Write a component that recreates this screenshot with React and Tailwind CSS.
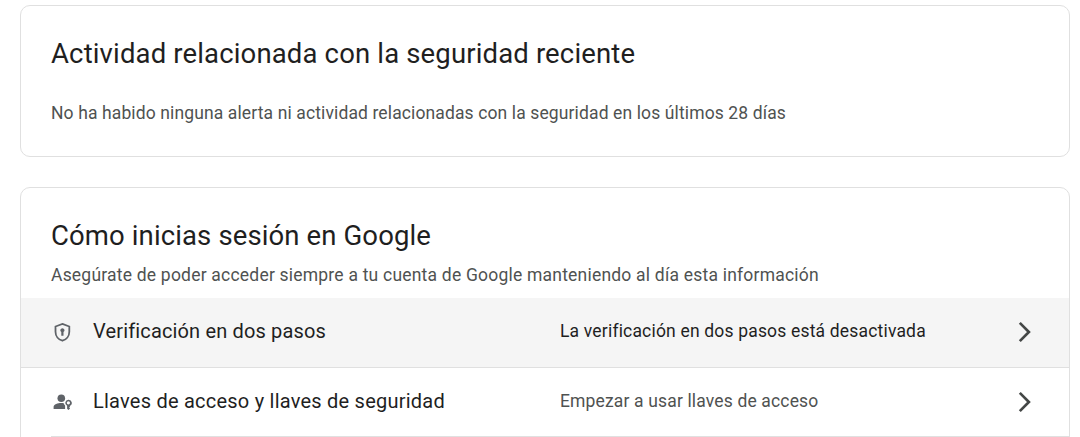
function ShieldLock() {
  return (
    <svg viewBox="0 0 22 22" className="size-[22px] shrink-0 -translate-y-px text-[#5f6368]" fill="currentColor">
      <path d="m11.4 2.9 6.9 2.6v5.2c0 4.2-2.9 7.9-6.9 9-4-1.1-6.9-4.8-6.9-9V5.5l6.9-2.6Z" fill="none" stroke="currentColor" strokeWidth="1.8" />
      <path d="M11.4 7.2a2.1 2.1 0 0 0-1.1 3.9v3.7h2.2v-3.7a2.1 2.1 0 0 0-1.1-3.9Z" />
    </svg>
  );
}

function PersonKey() {
  return (
    <svg viewBox="0 0 22 22" className="size-[22px] shrink-0 text-[#5f6368]" fill="currentColor">
      <circle cx="10.3" cy="7.3" r="3.8" />
      <path d="M2.6 17.9v-1.8c0-2.7 4.2-4 7.7-4 1.1 0 1.9.1 2.7.3.2 1 .5 1.5 1.1 2v3.5Z" />
      <path fillRule="evenodd" d="M17.4 8.7a3.2 3.2 0 0 0-1.3 6.1v3l1.3 1.2 1.7-1.6-.9-1 .9-1-.4-.5a3.2 3.2 0 0 0-1.3-6.2Zm0 1.5a1.6 1.6 0 1 1 0 3.2 1.6 1.6 0 0 1 0-3.2Z" />
    </svg>
  );
}

function Chevron() {
  return (
    <svg viewBox="0 0 14 22" className="h-[22px] w-[14px] shrink-0" fill="none" stroke="#444746" strokeWidth="2.7">
      <path d="m1.8 1.9 9.1 9.1-9.1 9.1" />
    </svg>
  );
}

export default function App() {
  return (
    <main className="flex h-[437px] flex-col gap-[30px] overflow-hidden bg-white pt-[5px] pr-[10px] pl-5 font-['Roboto',sans-serif] whitespace-nowrap text-[#1f1f1f]">
      <section className="h-[152px] shrink-0 rounded-[10px] border border-[#e0e0e0] px-[30px] pt-[30px]">
        <h2 className="text-[27.5px] leading-[35px] tracking-[0.15px]">Actividad relacionada con la seguridad reciente</h2>
        <p className="mt-[30px] text-[17.5px] leading-[25px] tracking-[0.12px] text-[#4f5251]">
          No ha habido ninguna alerta ni actividad relacionadas con la seguridad en los últimos 28 días
        </p>
      </section>
      <section className="h-[300px] shrink-0 rounded-[10px] border border-[#e0e0e0]">
        <header className="h-[110px] px-[30px] pt-[30px]">
          <h2 className="text-[27.5px] leading-[35px] tracking-[0.12px]">Cómo inicias sesión en Google</h2>
          <p className="mt-[10px] text-[17.5px] leading-[25px] tracking-[0.21px] text-[#4f5251]">
            Asegúrate de poder acceder siempre a tu cuenta de Google manteniendo al día esta información
          </p>
        </header>
        <a className="flex h-[70px] items-center border-b border-[#e0e0e0] bg-[#f5f5f5] pr-[37px] pl-[30px]">
          <ShieldLock />
          <span className="ml-5 w-[467px] pb-1 text-[20px] tracking-[0.15px]">Verificación en dos pasos</span>
          <span className="flex-1 pb-0.5 text-[17.5px] tracking-[0.18px]">La verificación en dos pasos está desactivada</span>
          <div className="pb-0.5"><Chevron /></div>
        </a>
        <a className="ml-[30px] flex h-[69px] items-center border-b border-[#e0e0e0] pr-[37px]">
          <PersonKey />
          <span className="ml-5 w-[467px] pb-0.5 text-[20px] tracking-[0.23px]">Llaves de acceso y llaves de seguridad</span>
          <span className="flex-1 pb-0.5 text-[17.5px] tracking-[0.15px] text-[#4f5251]">Empezar a usar llaves de acceso</span>
          <Chevron />
        </a>
      </section>
    </main>
  );
}
